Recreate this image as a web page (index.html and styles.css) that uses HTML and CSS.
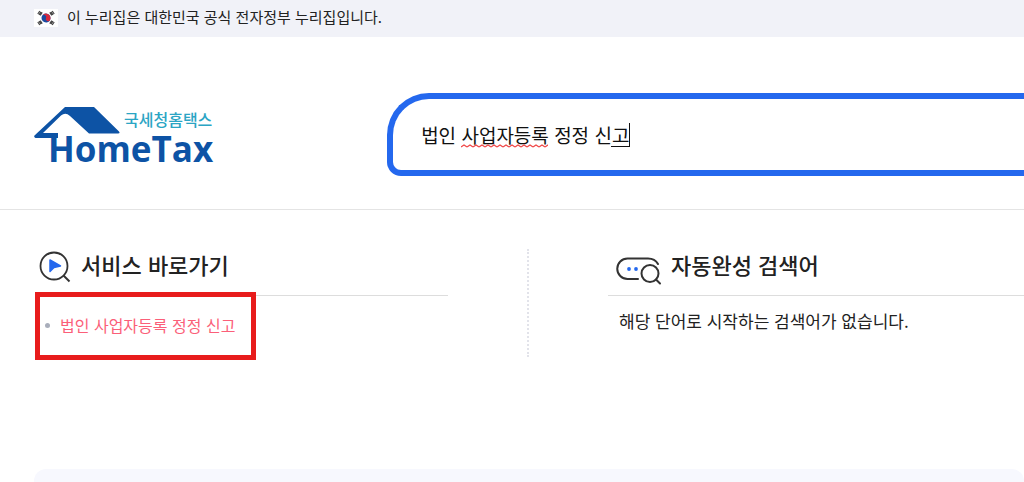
FILE: index.html
```html
<!DOCTYPE html>
<html lang="ko">
<head>
    <meta charset="UTF-8">
    <meta name="viewport" content="width=device-width, initial-scale=1.0">
    <title>국세청 홈택스</title>
    <link rel="stylesheet" href="styles.css">
</head>
<body>

<div class="gov-bar">
    <svg class="flag" viewBox="0 0 24 18" aria-hidden="true">
        <rect width="24" height="18" fill="#fff"/>
        <g transform="rotate(25 12 9)">
            <circle cx="12" cy="9" r="4.500" fill="#1c4ba0"/>
            <path d="M7.500 9a4.500 4.500 0 0 1 9 0a2.250 2.250 0 0 1-4.500 0a2.250 2.250 0 0 0-4.500 0z" fill="#d8283c"/>
        </g>
        <g stroke="#444" stroke-width="1.200">
            <path d="M3.800 5l2-3M5 5.800l2-3M6.200 6.400l2-3"/>
            <path d="M20.200 5l-2-3M19 5.800l-2-3M17.800 6.400l-2-3"/>
            <path d="M3.800 13l2 3M5 12.200l2 3M6.200 11.600l2 3"/>
            <path d="M20.200 13l-2 3M19 12.200l-2 3M17.800 11.600l-2 3"/>
        </g>
    </svg>
    <span>이 누리집은 대한민국 공식 전자정부 누리집입니다.</span>
</div>

<header class="header">
    <a class="logo" href="#">
        <svg class="logo-roof" viewBox="0 0 86 32" aria-hidden="true">
            <path d="M31 0h29l25 24.500q1.500 2-1 2H55L36 9q-4.500-4-9-0.500L9 26h15v5H1.500Q-0.500 30 0.500 28.500z" fill="#0d53a5"/>
        </svg>
        <span class="logo-ko">국세청홈택스</span>
        <span class="logo-en">HomeTax</span>
    </a>
    <form class="search">
        <div class="search-field">
            <input class="search-input" type="text" value="법인 사업자등록 정정 신고" aria-label="검색어" spellcheck="false" autocomplete="off">
            <svg class="spell-mark" aria-hidden="true">
                <defs>
                    <pattern id="wave" width="6" height="4" patternUnits="userSpaceOnUse">
                        <path d="M0 3l3-2l3 2" fill="none" stroke="#f04444" stroke-width="1.200"/>
                    </pattern>
                </defs>
                <rect width="100%" height="4" fill="url(#wave)"/>
            </svg>
            <span class="caret"></span>
        </div>
    </form>
</header>

<main class="results">
    <section class="panel">
        <h2 class="panel-title">
            <svg class="icon-go" viewBox="0 0 32 32" fill="none" aria-hidden="true">
                <circle cx="15" cy="15" r="13.500" stroke="#333" stroke-width="1.800"/>
                <path d="M24.500 24.500l6 6" stroke="#333" stroke-width="2"/>
                <path d="M11 9l10.500 6l-6.500 1.500l-4 4z" fill="#2468ee" stroke="#2468ee" stroke-width="1.500" stroke-linejoin="round"/>
            </svg>
            <span>서비스 바로가기</span>
        </h2>
        <ul class="links">
            <li><a href="#">법인 사업자등록 정정 신고</a></li>
        </ul>
    </section>
    <div class="divider"></div>
    <section class="panel panel-auto">
        <h2 class="panel-title">
            <svg class="icon-auto" viewBox="0 0 46 28" fill="none" stroke="#333" stroke-width="2" stroke-linecap="round" aria-hidden="true">
                <path d="M22 22H11.500a10.250 10.250 0 0 1 0-20.500H32q7 0 10 5.500"/>
                <circle cx="34" cy="16.500" r="8.500"/>
                <path d="M40 22.500l4 4"/>
                <circle cx="13" cy="12" r="1.900" fill="#2468ee" stroke="none"/>
                <circle cx="20" cy="12" r="1.900" fill="#2468ee" stroke="none"/>
            </svg>
            <span>자동완성 검색어</span>
        </h2>
        <p class="empty">해당 단어로 시작하는 검색어가 없습니다.</p>
    </section>
</main>

<div class="banner"></div>

</body>
</html>
```
FILE: styles.css
```css
* {
    box-sizing: border-box;
}

body {
    margin: 0;
    font-family: "Noto Sans CJK KR", sans-serif;
    color: #222;
    background-color: #fff;
}

.gov-bar {
    display: flex;
    align-items: flex-start;
    gap: 9px;
    padding: 5px 34px 8px;
    font-size: 15px;
    line-height: 24px;
    background-color: #f1f2f8;
}

.flag {
    width: 24px;
    height: 18px;
    margin-top: 4px;
}

/* Logo + search */
.header {
    display: flex;
    align-items: flex-start;
    gap: 174px;
    padding: 56px 0 33px 34px;
    border-bottom: 1px solid #e4e4e4;
}

.logo {
    display: grid;
    grid-template-columns: 86px auto;
    column-gap: 4px;
    margin-top: 14px;
    text-decoration: none;
}

.logo-roof {
    width: 86px;
    height: 32px;
}

.logo-ko {
    font-size: 16px;
    font-weight: 500;
    line-height: 24px;
    color: #2ba5c4;
}

.logo-en {
    grid-column: 1 / 3;
    margin-top: -8px;
    padding-left: 14px;
    font-family: "Open Sans", sans-serif;
    font-size: 35px;
    font-weight: 700;
    line-height: 36px;
    color: #0d53a5;
}

.search {
    flex: 1;
    border: 6px solid #2468ee;
    border-right: none;
    border-radius: 42px 0 0 14px;
    padding: 20px 0 20px 28px;
}

.search-field {
    position: relative;
}

.search-input {
    display: block;
    width: 100%;
    height: 31px;
    padding: 0;
    border: none;
    outline: none;
    background: none;
    font-family: inherit;
    font-size: 19px;
    color: #111;
}

.spell-mark {
    position: absolute;
    left: 40px;
    top: 25px;
    width: 87px;
    height: 4px;
}

.caret {
    position: absolute;
    left: 190px;
    top: 4px;
    width: 19px;
    height: 24px;
    border-right: 1px solid #111;
    border-bottom: 1px solid #111;
}

/* Suggestions */
.results {
    display: grid;
    grid-template-columns: 413fr 160px 416fr;
    padding: 39px 0 0 35px;
}

.panel-title {
    display: flex;
    align-items: flex-start;
    gap: 10px;
    height: 47px;
    margin: 0;
    padding: 2px 0 0 4px;
    border-bottom: 1px solid #ddd;
    font-size: 22px;
    font-weight: 500;
    line-height: 26px;
}

.panel-auto .panel-title {
    gap: 9px;
    padding-left: 8px;
}

.icon-go {
    width: 32px;
    height: 32px;
}

.icon-auto {
    width: 46px;
    height: 28px;
    margin-top: 6px;
}

.links {
    position: relative;
    width: 221px;
    margin: -4px 0 0;
    padding: 16px 5px 17px;
    border: 5px solid #e81c1c;
    list-style: none;
}

.links li {
    display: flex;
    align-items: center;
    gap: 10px;
    line-height: 25px;
}

.links li::before {
    content: "";
    width: 5px;
    height: 5px;
    border-radius: 50%;
    background-color: #a9aebb;
}

.links a {
    font-size: 16px;
    color: #fb5f79;
    text-decoration: none;
    white-space: nowrap;
}

.divider {
    justify-self: center;
    height: 108px;
    border-left: 2px dotted #e2e3ea;
}

.empty {
    margin: 0;
    padding: 12px 11px;
    font-size: 17px;
    line-height: 26px;
}

.banner {
    height: 13px;
    margin: 109px 0 0 34px;
    border-radius: 12px 12px 0 0;
    background-color: #f7f8fe;
}
```
